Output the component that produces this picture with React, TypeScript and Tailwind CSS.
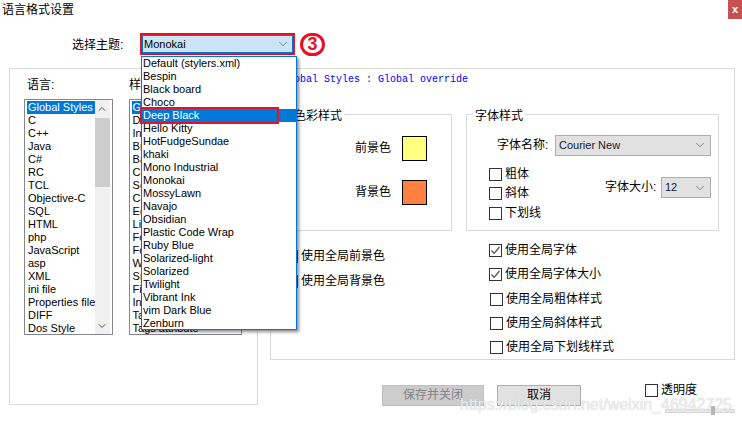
import React from 'react'
import { ChevronDown, ChevronUp } from 'lucide-react'

const languages = ['Global Styles', 'C', 'C++', 'Java', 'C#', 'RC', 'TCL', 'Objective-C', 'SQL', 'HTML', 'php', 'JavaScript', 'asp', 'XML', 'ini file', 'Properties file', 'DIFF', 'Dos Style']
const styles = ['Global override', 'Default Style', 'Indent guideline style', 'Brace highlight style', 'Bad brace colour', 'Current line background', 'Selected text colour', 'Caret colour', 'Edge colour', 'Line number margin', 'Fold', 'Fold margin', 'White space symbol', 'Smart HighLighting', 'Find Mark Style', 'Incremental highlight', 'Tags match highlighting', 'Tags attribute']
const themes = ['Default (stylers.xml)', 'Bespin', 'Black board', 'Choco', 'Deep Black', 'Hello Kitty', 'HotFudgeSundae', 'khaki', 'Mono Industrial', 'Monokai', 'MossyLawn', 'Navajo', 'Obsidian', 'Plastic Code Wrap', 'Ruby Blue', 'Solarized-light', 'Solarized', 'Twilight', 'Vibrant Ink', 'vim Dark Blue', 'Zenburn']

const Check = ({ label, checked = false, className = '' }: { label: string; checked?: boolean; className?: string }) => (
  <div className={`flex items-center h-[14px] ${className}`}>
    <span className="w-[13px] h-[13px] border border-[#333333] bg-white flex-shrink-0 flex items-center justify-center">
      {checked && (
        <svg width="11" height="11" viewBox="0 0 11 11" fill="none" stroke="#555555" strokeWidth="1.3">
          <path d="M1.5 5.5L4.2 8.3L9.5 2" />
        </svg>
      )}
    </span>
    <span className="ml-[3px] whitespace-nowrap">{label}</span>
  </div>
)

const Select = ({ value, className }: { value: string; className: string }) => (
  <div className={`flex items-center justify-between bg-[#e1e1e1] border border-[#adadad] pl-[3px] pr-[3px] text-[11px] text-[#111a33] ${className}`}>
    <span>{value}</span>
    <ChevronDown size={14} strokeWidth={1} color="#444444" />
  </div>
)

export default function App() {
  return (
    <div className="relative w-[742px] h-[423px] overflow-hidden bg-white text-[12px] leading-[13px] text-black font-['Liberation_Sans','Noto_Sans_CJK_SC',sans-serif]">
      {/* Title bar */}
      <div className="h-[33px] flex justify-between pl-[2px] pt-[4px]">
        <span>语言格式设置</span>
        <span className="w-[14px] h-[19px] -mt-[4px] bg-[#c75050] text-white text-[11px] font-bold flex items-center justify-center">x</span>
      </div>

      {/* Theme row */}
      <div className="h-[35px] flex items-start pl-[72px]">
        <span className="w-[68px] mt-[6px]">选择主题:</span>
        <div className="w-[155px] h-[22px] border-2 border-[#e81123]">
          <div className="h-full flex items-center justify-between bg-[#cce4f7] border border-[#0078d7] pl-[1px] pr-[2px] text-[11px]">
            <span>Monokai</span>
            <ChevronDown size={14} strokeWidth={1} color="#444444" />
          </div>
        </div>
        <div className="ml-[5px] w-[25px] h-[23px] rounded-full border-[3px] border-[#e81123] text-[#e81123] text-[18px] font-bold flex items-center justify-center">3</div>
      </div>

      <div className="flex items-start pl-[9px]">
        {/* Left panel */}
        <div className="w-[249px] h-[337px] border border-[#d9d9d9] pl-[14px] pr-[15px] pt-[10px]">
          <div className="flex h-[20px] pl-[3px]">
            <span className="w-[102px]">语言:</span>
            <span>样式:</span>
          </div>
          <div className="flex gap-[16px] text-[11px]">
            <div className="relative w-[89px] h-[236px] border border-[#828790] pl-[2px] pt-[1px] overflow-hidden">
              {languages.map((item, i) => (
                <div key={item} className={`h-[13px] pl-[1px] whitespace-nowrap ${i === 0 ? 'bg-[#0078d7] text-white w-[68px]' : ''}`}>{item}</div>
              ))}
              <div className="absolute right-[2px] top-0 bottom-0 w-[15px] bg-[#f0f0f0] flex flex-col justify-between">
                <div>
                  <div className="h-[18px] flex items-center justify-center"><ChevronUp size={12} strokeWidth={2} color="#555555" /></div>
                  <div className="h-[69px] bg-[#cdcdcd]" />
                </div>
                <div className="h-[17px] flex items-center justify-center"><ChevronDown size={12} strokeWidth={2} color="#555555" /></div>
              </div>
            </div>
            <div className="w-[114px] h-[236px] border border-[#828790] pl-[2px] pt-[1px] overflow-hidden">
              {styles.map((item, i) => (
                <div key={item} className={`h-[13px] pl-[1px] whitespace-nowrap ${i === 0 ? 'bg-[#0078d7] text-white' : ''}`}>{item}</div>
              ))}
            </div>
          </div>
        </div>

        {/* Right panel */}
        <div className="ml-[12px] w-[465px]">
          <div className="h-[292px] border border-[#d9d9d9] pl-[12px] pt-[4px]">
            <div className="-ml-[1px] h-[41px] text-[10px] text-[#0000ff] font-['Liberation_Mono',monospace]">Global Styles : Global override</div>
            <div className="flex gap-[14px]">
              <fieldset className="relative w-[169px] h-[117px] border border-[#d9d9d9]">
                <legend className="absolute -top-[5px] left-[8px] bg-white px-[2px]">色彩样式</legend>
                <div className="flex items-center justify-end h-[24px] mt-[21px] pr-[24px]">
                  <span className="mr-[11px]">前景色</span>
                  <span className="w-[25px] h-[25px] border border-black bg-[#ffff80]" />
                </div>
                <div className="flex items-center justify-end h-[24px] mt-[20px] pr-[24px]">
                  <span className="mr-[11px]">背景色</span>
                  <span className="w-[25px] h-[25px] border border-black bg-[#ff8040]" />
                </div>
              </fieldset>
              <fieldset className="relative w-[253px] h-[117px] border border-[#d9d9d9]">
                <legend className="absolute -top-[5px] left-[6px] bg-white px-[2px]">字体样式</legend>
                <div className="flex items-center h-[22px] mt-[19px] pl-[30px]">
                  <span className="w-[58px]">字体名称:</span>
                  <Select value="Courier New" className="w-[156px] h-[21px]" />
                </div>
                <div className="flex mt-[11px] pl-[22px]">
                  <div className="flex flex-col gap-[5.5px] w-[116px]">
                    <Check label="粗体" />
                    <Check label="斜体" />
                    <Check label="下划线" />
                  </div>
                  <div className="flex items-start mt-[10px]">
                    <span className="w-[56px] mt-[4px]">字体大小:</span>
                    <Select value="12" className="w-[50px] h-[21px]" />
                  </div>
                </div>
              </fieldset>
            </div>
            <div className="flex mt-[12px]">
              <div className="w-[206px] pt-[6px] pl-[2px] flex flex-col gap-[11px]">
                <Check label="使用全局前景色" />
                <Check label="使用全局背景色" />
              </div>
              <div className="flex flex-col gap-[10px]">
                <Check label="使用全局字体" checked />
                <Check label="使用全局字体大小" checked />
                <Check label="使用全局粗体样式" className="ml-[1px] mt-[1px]" />
                <Check label="使用全局斜体样式" className="ml-[1px]" />
                <Check label="使用全局下划线样式" className="ml-[1px]" />
              </div>
            </div>
          </div>

          {/* Footer */}
          <div className="flex items-start mt-[23px] pl-[112px]">
            <button className="w-[102px] h-[21px] mt-[2px] bg-[#cccccc] border border-[#bfbfbf] text-[#838383]">保存并关闭</button>
            <button className="w-[84px] h-[21px] mt-[2px] ml-[13px] bg-[#e1e1e1] border border-[#adadad]">取消</button>
            <div className="ml-[64px] flex flex-col">
              <Check label="透明度" />
              <div className="relative w-[70px] h-[4px] mt-[12px] ml-[20px] bg-[#e7e7e7] border border-[#d6d6d6]">
                <span className="absolute left-[45px] -top-[4px] w-[4px] h-[9px] bg-[#b5b5b5]" />
              </div>
            </div>
          </div>
        </div>
      </div>

      {/* Theme dropdown list */}
      <div className="absolute left-[141px] top-[56px] w-[156px] h-[274px] bg-white border border-[#0078d7] shadow-[2px_2px_3px_rgba(0,0,0,0.45)] text-[11px]">
        {themes.map((item, i) => (
          <div key={item} className={`h-[13px] pl-[1px] whitespace-nowrap ${i === 4 ? 'bg-[#0078d7] text-white' : ''}`}>{item}</div>
        ))}
      </div>
      <div className="absolute left-[140px] top-[107px] w-[139px] h-[17px] border-2 border-[#e81123]" />

      {/* Watermark */}
      <div className="absolute left-[460px] top-[396px] whitespace-nowrap text-[16px] leading-[18px] text-white/70 [text-shadow:0_0_1px_#bbbbbb]">https://blog.csdn.net/weixin_46942725</div>
    </div>
  )
}
